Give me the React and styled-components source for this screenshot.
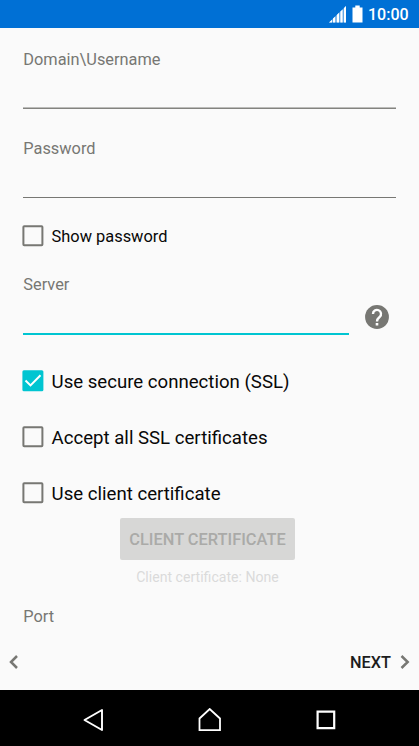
import React from "react";
import styled, { createGlobalStyle } from "styled-components";

const Global = createGlobalStyle`
  * { box-sizing: border-box; }
  body { margin: 0; background: #fafafa; font-family: Roboto, sans-serif; }
  svg { display: block; flex: none; }
`;
const Screen = styled.div`
  display: flex;
  flex-direction: column;
  width: 419px;
  height: 746px;
  overflow: hidden;
  background: #fafafa;
`;
const StatusBar = styled.header`
  display: flex;
  align-items: center;
  justify-content: flex-end;
  height: 28px;
  flex: none;
  padding-right: 10px;
  background: #0070d5;
  color: #fff;
`;
const Clock = styled.span`
  margin-left: 5px;
  width: 41px;
  font-size: 16px;
  font-weight: 500;
  line-height: 20px;
  padding-top: 1px;
  white-space: nowrap;
`;
const Form = styled.main`
  display: flex;
  flex-direction: column;
  height: 606px;
  flex: none;
  padding: 0 23px;
`;
const Field = styled.label`
  display: block;
  flex: none;
  height: ${(p) => p.$height}px;
  width: ${(p) => p.$width || 373}px;
  padding: ${(p) => p.$top}px 0 0 0.3px;
  border-bottom: ${(p) => p.$line || "0"};
  box-shadow: ${(p) => (p.$soft ? "inset 0 -1px 0 #bcbcba" : "none")};
  color: #777773;
  font-size: 16.35px;
  line-height: 20px;
`;
const ServerRow = styled.div`
  display: flex;
  flex: none;
  justify-content: space-between;
  width: 367px;
`;
const HelpButton = styled.button`
  align-self: flex-end;
  padding: 0;
  margin-bottom: 5px;
  border: 0;
  background: none;
`;
const CheckRow = styled.label`
  display: flex;
  flex: none;
  align-items: center;
  height: ${(p) => p.$height}px;
  margin-left: -1px;
  color: #080808;
  font-size: ${(p) => p.$size}px;
  line-height: 24px;
`;
const CheckText = styled.span`
  margin-left: 7.6px;
  padding-top: 1px;
  white-space: nowrap;
`;
const CertificateButton = styled.button`
  align-self: center;
  width: 175px;
  height: 42px;
  flex: none;
  margin: -21px 4px 0 0;
  padding: 2px 0 0;
  border: 0;
  border-radius: 2px;
  background: #d7d7d6;
  color: #aaaaa8;
  font: 500 16.4px/20px Roboto, sans-serif;
  white-space: nowrap;
`;
const CertificateNote = styled.div`
  margin: 7px 4px 0 0;
  height: 20px;
  flex: none;
  text-align: center;
  color: #dadada;
  font-size: 14.1px;
  line-height: 20px;
`;
const Footer = styled.footer`
  display: flex;
  align-items: center;
  justify-content: space-between;
  height: 56px;
  flex: none;
  padding: 0 9px;
`;
const Next = styled.button`
  display: flex;
  align-items: center;
  gap: 9px;
  padding: 0;
  border: 0;
  background: none;
  color: #1c1c1c;
  font: 500 16.3px/20px Roboto, sans-serif;
`;
const NextText = styled.span`
  padding-top: 2px;
`;
const NavBar = styled.nav`
  display: flex;
  align-items: center;
  justify-content: space-between;
  height: 56px;
  flex: none;
  padding: 4px 83px 0 83px;
  background: #000;
`;

function Check({ checked, children, ...row }) {
  return (
    <CheckRow {...row}>
      <svg width="22" height="22" viewBox="0 0 22 22">
        {checked ? (
          <>
            <rect x="0.4" y="0.2" width="21" height="21" rx="1.5" fill="#00c5d1" />
            <path d="M3.5 10.5l5 4.9L18.5 5.2" fill="none" stroke="#fff" strokeWidth="2" />
          </>
        ) : (
          <rect x="1.4" y="1.2" width="19" height="19" rx="0.8" fill="none" stroke="#777773" strokeWidth="2" />
        )}
      </svg>
      <CheckText>{children}</CheckText>
    </CheckRow>
  );
}

function Chevron({ right }) {
  return (
    <svg width="10" height="14" viewBox="0 0 10 14" fill="none" stroke="#777773" strokeWidth="2.5">
      <path d={right ? "M1.5 1L7.7 7l-6.2 6" : "M8 1L2 7l6 6"} />
    </svg>
  );
}

export default function App() {
  return (
    <Screen>
      <Global />
      <StatusBar>
        <svg width="35" height="18" viewBox="0 0 35 18">
          <path d="M1 17.5L18 1v16.5z" fill="#fff" fillOpacity="0.4" />
          <path d="M1 17.5l3-2.8v2.8zM5 17.5v-3.9l2.2-2.1v6zM8.8 17.5V10l2.2-2.2v9.7zM12.4 17.5V6.5l2.2-2.1v13.1zM16 17.5V3l2-2v16.5z" fill="#fff" />
          <path d="M24.5 2.4h2.8V.5h4.4v1.9h2.8v15h-10z" fill="#fff" />
        </svg>
        <Clock>10:00</Clock>
      </StatusBar>
      <Form>
        <Field $height={81} $top={22} $line="1px solid #83837f" $soft>Domain\Username</Field>
        <Field $height={89} $top={30} $line="1px solid #777773">Password</Field>
        <Check $height={76} $size={16.4}>Show password</Check>
        <ServerRow>
          <Field $height={61} $width={326} $top={1} $line="2px solid #00c5d1">Server</Field>
          <HelpButton aria-label="Help">
            <svg width="26" height="26" viewBox="0 0 24 24">
              <circle cx="12" cy="12" r="11" fill="#777773" />
              <path d="M8.3 9.2a3.7 3.7 0 1 1 6.2 2.7c-1.500 1.300-2.500 1.900-2.500 4.300" fill="none" stroke="#fff" strokeWidth="2.2" />
              <path d="M10.8 17.6h2.4v2.2h-2.4z" fill="#fff" />
            </svg>
          </HelpButton>
        </ServerRow>
        <Check $height={92} $size={18.63} checked>Use secure connection (SSL)</Check>
        <Check $height={20} $size={18.63}>Accept all SSL certificates</Check>
        <Check $height={92} $size={18.63}>Use client certificate</Check>
        <CertificateButton disabled>CLIENT CERTIFICATE</CertificateButton>
        <CertificateNote>Client certificate: None</CertificateNote>
        <Field $height={47} $top={20}>Port</Field>
      </Form>
      <Footer>
        <Chevron />
        <Next><NextText>NEXT</NextText><Chevron right /></Next>
      </Footer>
      <NavBar>
        <svg width="22" height="24" viewBox="0 0 22 24" fill="none" stroke="#fff" strokeWidth="1.9">
          <path d="M1.5 12L19 2v20z" strokeLinejoin="round" />
        </svg>
        <svg width="26" height="24" viewBox="0 0 26 24" fill="none" stroke="#fff" strokeWidth="1.8">
          <path d="M1.5 22.2V10.5L11.7 1 22 10.5v11.7z" />
        </svg>
        <svg width="20" height="20" viewBox="0 0 20 20" fill="none" stroke="#fff" strokeWidth="2.2">
          <path d="M1.6 1.6h16.6v16.6H1.6z" />
        </svg>
      </NavBar>
    </Screen>
  );
}
